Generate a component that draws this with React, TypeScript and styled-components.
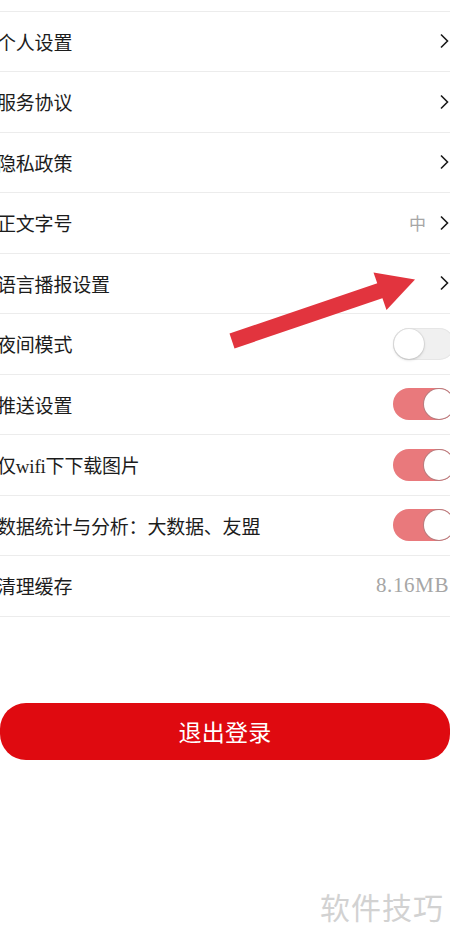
import React from 'react';
import styled, { createGlobalStyle } from 'styled-components';

const GlobalStyle = createGlobalStyle`
  html, body {
    margin: 0;
    padding: 0;
    background: #ffffff;
    overflow: hidden;
  }
  body {
    font-family: "Liberation Serif", "Noto Sans CJK SC", serif;
  }
`;

const Page = styled.div`
  position: relative;
  width: 450px;
  height: 938px;
  background: #fff;
  overflow: hidden;
`;

const TopSpacer = styled.div`
  height: 10.5px;
  border-bottom: 1px solid #ececec;
`;

const List = styled.div`
  display: flex;
  flex-direction: column;
`;

const Row = styled.div`
  height: 59.5px;
  display: flex;
  align-items: center;
  border-bottom: 1px solid #ececec;
`;

const Label = styled.span`
  flex: 1;
  margin-left: -3px;
  font-size: 19px;
  color: #1c1c1c;
  letter-spacing: -0.2px;
`;

const Value = styled.span<{ $mono?: boolean }>`
  font-size: ${p => (p.$mono ? '21px' : '17px')};
  letter-spacing: ${p => (p.$mono ? '0.6px' : '0')};
  color: #a6a6a6;
  margin-right: ${p => (p.$mono ? '1px' : '14px')};
`;

const Chevron = styled.svg`
  width: 9px;
  height: 16px;
  margin-right: 1px;
  flex-shrink: 0;
`;

const Switch = styled.div<{ $on?: boolean }>`
  position: relative;
  width: 62px;
  height: 32px;
  margin-right: -5px;
  border-radius: 16px;
  background: ${p => (p.$on ? '#e9797c' : '#f0f0f0')};
  box-shadow: ${p => (p.$on ? 'none' : 'inset 0 0 0 1px #e6e6e6')};
`;

const Knob = styled.div<{ $on?: boolean }>`
  position: absolute;
  top: 1px;
  left: ${p => (p.$on ? '31px' : '1px')};
  width: 30px;
  height: 30px;
  border-radius: 50%;
  background: #fff;
  box-shadow: ${p =>
    p.$on ? '0 0 0 1px #b87d7f' : '0 1px 3px rgba(0,0,0,0.18), 0 0 0 1px #e4e4e4'};
`;

const LogoutWrap = styled.div`
  padding: 86px 0 0;
`;

const LogoutButton = styled.button`
  display: block;
  width: 450px;
  height: 57px;
  border: none;
  border-radius: 26px;
  background: #df0a10;
  color: #fff;
  font-family: "Liberation Serif", "Noto Sans CJK SC", serif;
  font-size: 23px;
  letter-spacing: 0.3px;
`;

const Watermark = styled.div`
  position: absolute;
  right: 6px;
  top: 884px;
  font-family: "Noto Sans CJK SC", sans-serif;
  font-size: 30px;
  letter-spacing: 1px;
  color: #d2d2d2;
`;

const Arrow = styled.svg`
  position: absolute;
  left: 0;
  top: 0;
  pointer-events: none;
`;

type Item =
  | { label: string; kind: 'link'; value?: string }
  | { label: string; kind: 'switch'; on: boolean }
  | { label: string; kind: 'value'; value: string };

const items: Item[] = [
  { label: '个人设置', kind: 'link' },
  { label: '服务协议', kind: 'link' },
  { label: '隐私政策', kind: 'link' },
  { label: '正文字号', kind: 'link', value: '中' },
  { label: '语言播报设置', kind: 'link' },
  { label: '夜间模式', kind: 'switch', on: false },
  { label: '推送设置', kind: 'switch', on: true },
  { label: '仅wifi下下载图片', kind: 'switch', on: true },
  { label: '数据统计与分析：大数据、友盟', kind: 'switch', on: true },
  { label: '清理缓存', kind: 'value', value: '8.16MB' },
];

const ChevronIcon = () => (
  <Chevron viewBox="0 0 9 16">
    <polyline points="1,1.5 7.5,8 1,14.5" fill="none" stroke="#1a1a1a" strokeWidth="1.6" />
  </Chevron>
);

export default function App() {
  return (
    <Page>
      <GlobalStyle />
      <TopSpacer />
      <List>
        {items.map(item => (
          <Row key={item.label}>
            <Label>{item.label}</Label>
            {item.kind === 'link' && (
              <>
                {item.value && <Value>{item.value}</Value>}
                <ChevronIcon />
              </>
            )}
            {item.kind === 'switch' && (
              <Switch $on={item.on}>
                <Knob $on={item.on} />
              </Switch>
            )}
            {item.kind === 'value' && <Value $mono>{item.value}</Value>}
          </Row>
        ))}
      </List>
      <LogoutWrap>
        <LogoutButton>退出登录</LogoutButton>
      </LogoutWrap>
      <Watermark>软件技巧</Watermark>
      <Arrow width="450" height="938" viewBox="0 0 450 938">
        <polygon
          points="229.5,333.5 379.5,282.5 384.5,297.5 234.5,348.5"
          fill="#e2343e"
        />
        <polygon points="415,279.5 373.5,272.5 386.5,310" fill="#e2343e" />
      </Arrow>
    </Page>
  );
}
